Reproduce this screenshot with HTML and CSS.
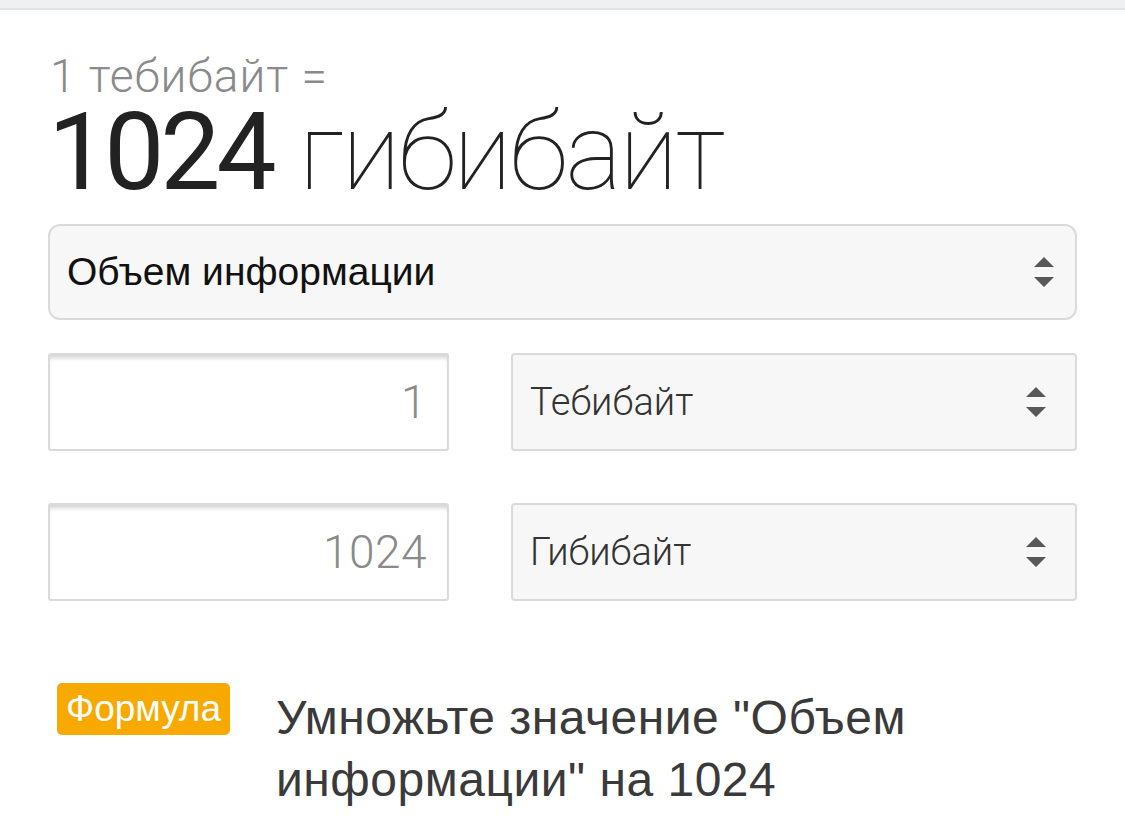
FILE: index.html
```html
<!DOCTYPE html>
<html lang="ru">
<head>
<meta charset="utf-8">
<title>Тебибайт в гибибайт</title>
<link rel="stylesheet" href="styles.css">
</head>
<body>
<div class="topbar"></div>
<main class="main">
  <div class="result-sub">1 тебибайт =</div>
  <div class="result-big"><span class="num">1024</span> <span class="unit">гибибайт</span></div>

  <div class="select select-cat">
    <span class="select-text">Объем информации</span>
    <svg class="arrows" width="22" height="32" viewBox="0 0 22 32"><path d="M11 1 L21 11 L1 11 Z M1 21 L21 21 L11 31 Z" fill="#585858"/></svg>
  </div>

  <div class="conv-row">
    <div class="num-input">1</div>
    <div class="select select-unit">
      <span class="select-text">Тебибайт</span>
      <svg class="arrows" width="22" height="32" viewBox="0 0 22 32"><path d="M11 1 L21 11 L1 11 Z M1 21 L21 21 L11 31 Z" fill="#585858"/></svg>
    </div>
  </div>

  <div class="conv-row conv-row-2">
    <div class="num-input">1024</div>
    <div class="select select-unit">
      <span class="select-text">Гибибайт</span>
      <svg class="arrows" width="22" height="32" viewBox="0 0 22 32"><path d="M11 1 L21 11 L1 11 Z M1 21 L21 21 L11 31 Z" fill="#585858"/></svg>
    </div>
  </div>

  <div class="formula">
    <span class="badge">Формула</span>
    <p class="formula-text">Умножьте значение "Объем информации" на 1024</p>
  </div>
</main>
</body>
</html>
```

FILE: styles.css
```css
* { box-sizing: border-box; }
html, body { margin: 0; padding: 0; background: #fff; }
body { font-family: "Liberation Sans", Arial, sans-serif; color: #222; }

.topbar {
  height: 10px;
  background: #eff0f2;
  border-bottom: 2px solid #e3e4e7;
}

.main { padding: 0 48px; }

.result-sub {
  margin-top: 42px;
  font-family: Roboto, "Liberation Sans", sans-serif;
  font-weight: 300;
  font-size: 46px;
  line-height: 48px;
  letter-spacing: 1px;
  color: #8a8a8a;
  padding-left: 2px;
}

.result-big {
  margin-top: 3px;
  font-family: Roboto, "Liberation Sans", sans-serif;
  font-size: 107px;
  line-height: 100px;
  white-space: nowrap;
}
.result-big .num { font-weight: 400; color: #222; letter-spacing: -4px; }
.result-big .unit { font-weight: 100; color: #222; letter-spacing: -2.5px; }

.select {
  display: flex;
  align-items: center;
  justify-content: space-between;
  background: #f7f7f7;
  border: 2px solid #dadadc;
}
.select-cat {
  margin-top: 21px;
  height: 96px;
  border-radius: 12px;
  padding: 0 20px 0 17px;
}
.select-cat .select-text {
  font-size: 39px;
  color: #111;
}
.select-unit {
  border-radius: 4px;
  padding: 0 28px 0 17px;
}
.select-unit .select-text {
  font-family: Roboto, "Liberation Sans", sans-serif;
  font-weight: 300;
  font-size: 38px;
  color: #333;
}

.conv-row {
  margin-top: 33px;
  display: grid;
  grid-template-columns: 401px 1fr;
  column-gap: 62px;
  height: 98px;
}
.conv-row-2 { margin-top: 52px; }

.num-input {
  border: 2px solid #dadada;
  border-radius: 3px;
  box-shadow: inset 0 5px 4px -2px #d4d4d4;
  background: #fff;
  display: flex;
  align-items: center;
  justify-content: flex-end;
  padding-right: 20px;
  font-family: Roboto, "Liberation Sans", sans-serif;
  font-weight: 300;
  font-size: 46px;
  letter-spacing: 0.5px;
  color: #8a8a8a;
}

.formula {
  margin-top: 82px;
  display: flex;
  align-items: flex-start;
  padding-left: 9px;
}
.badge {
  flex: none;
  background: #f7a900;
  color: #fff;
  border-radius: 5px;
  font-size: 37px;
  height: 52px;
  line-height: 52px;
  padding: 0 9px;
}
.formula-text {
  margin: 4px 0 0 46px;
  font-size: 48px;
  line-height: 62px;
  letter-spacing: 0.5px;
  color: #3a3a3a;
  max-width: 700px;
}
```
